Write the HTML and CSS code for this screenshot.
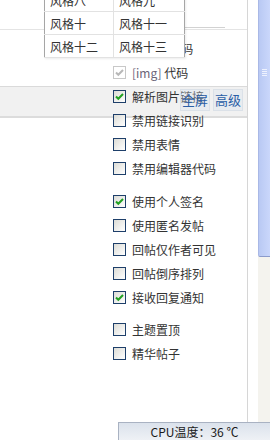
FILE: index.html
```html
<!DOCTYPE html>
<html lang="zh-CN">
<head>
    <meta charset="UTF-8">
    <meta name="viewport" content="width=device-width, initial-scale=1.0">
    <title>发帖选项</title>
    <link rel="stylesheet" href="styles.css">
</head>
<body>

    <div class="screen">
        <div class="page">
            <div class="head"><span class="field"></span></div>

            <!-- barre d'outils de l'éditeur -->
            <div class="toolbar"></div>
            <div class="tool-buttons">
                <span class="tool-btn">全屏</span>
                <span class="tool-btn">高级</span>
            </div>

            <div class="options">
                <ul class="group">
                    <li><span class="box"></span>[html]&nbsp;代码</li>
                    <li class="disabled"><span class="box checked"><svg viewBox="0 0 11 11"><path d="M2 5.5 L4.3 7.8 L9 3"/></svg></span><span class="tag">[img]&nbsp;</span>代码</li>
                    <li><span class="box checked"><svg viewBox="0 0 11 11"><path d="M2 5.5 L4.3 7.8 L9 3"/></svg></span>解析图片链接</li>
                    <li><span class="box"></span>禁用链接识别</li>
                    <li><span class="box"></span>禁用表情</li>
                    <li><span class="box"></span>禁用编辑器代码</li>
                </ul>
                <ul class="group second">
                    <li><span class="box checked"><svg viewBox="0 0 11 11"><path d="M2 5.5 L4.3 7.8 L9 3"/></svg></span>使用个人签名</li>
                    <li><span class="box"></span>使用匿名发帖</li>
                    <li><span class="box"></span>回帖仅作者可见</li>
                    <li><span class="box"></span>回帖倒序排列</li>
                    <li><span class="box checked"><svg viewBox="0 0 11 11"><path d="M2 5.5 L4.3 7.8 L9 3"/></svg></span>接收回复通知</li>
                </ul>
                <ul class="group third">
                    <li><span class="box"></span>主题置顶</li>
                    <li><span class="box"></span>精华帖子</li>
                </ul>
            </div>

            <!-- menu déroulant des styles -->
            <table class="style-menu">
                <tr><td>风格八</td><td>风格九</td></tr>
                <tr><td>风格十</td><td>风格十一</td></tr>
                <tr><td>风格十二</td><td>风格十三</td></tr>
            </table>
        </div>
        <div class="gap"></div>
        <div class="scroll">
            <div class="thumb">
                <svg class="grip" viewBox="0 0 5 8"><path d="M0 1.5h5M0 3.5h5M0 5.5h5M0 7.5h5"/></svg>
            </div>
        </div>
    </div>

    <div class="status">CPU温度：36 ℃</div>

</body>
</html>
```

FILE: styles.css
```css
body {
    margin: 0;
    font-family: "Noto Sans CJK SC", "Noto Sans", sans-serif;
    font-size: 12px;
    color: #333;
    background-color: #ffffff;
    overflow: hidden;
}

.screen {
    display: grid;
    grid-template-columns: 248px 10px 12px;
    height: 440px;
}

.page {
    position: relative;
    border-right: 1px solid #d6d6d6;
}

.head {
    height: 30px;
    padding-left: 185px;
    border-bottom: 1px solid #e4e4e4;
    box-sizing: border-box;
}
.field {
    display: block;
    width: 40px;
    height: 28px;
    border-bottom: 1px solid #d2d2d2;
    box-sizing: border-box;
}

.toolbar {
    position: absolute;
    top: 86px;
    left: 0;
    right: 0;
    height: 29px;
    background-color: #f1f1f1;
    border-top: 1px solid #dadada;
    border-bottom: 2px solid #dcdcdc;
}
.tool-buttons {
    position: absolute;
    top: 89px;
    left: 180px;
    display: flex;
    gap: 3px;
    z-index: 2;
}
.tool-btn {
    width: 28px;
    height: 20px;
    line-height: 20px;
    text-align: center;
    font-size: 13px;
    color: #2a5ea6;
    background-color: rgba(214, 226, 238, 0.35);
    border: 1px solid #dbe1e8;
}

.options {
    position: relative;
    z-index: 1;
    margin-top: 6px;
}
.group {
    list-style: none;
    margin: 0;
    padding: 0;
}
.group.second {
    margin-top: 9px;
}
.group.third {
    margin-top: 8px;
}
.group li {
    display: flex;
    align-items: center;
    height: 24px;
    padding-left: 113px;
    white-space: nowrap;
}

.box {
    display: inline-flex;
    width: 11px;
    height: 11px;
    margin-right: 6px;
    border: 1px solid #1e3f6a;
    background: linear-gradient(135deg, #dcdcd6, #ffffff);
}
.box svg {
    width: 11px;
    height: 11px;
    fill: none;
    stroke: #21a121;
    stroke-width: 2;
}
.disabled .box {
    border-color: #c8c8c8;
    background: #ffffff;
}
.disabled .box svg {
    stroke: #b8b8b8;
}
.disabled .tag {
    color: #6b6478;
}

.style-menu {
    position: absolute;
    top: -12px;
    left: 44px;
    width: 141px;
    border-collapse: collapse;
    background-color: #ffffff;
    border: 1px solid #a6a6a6;
    box-shadow: 1px 1px 2px rgba(0, 0, 0, 0.08);
    z-index: 3;
}
.style-menu td {
    height: 22px;
    padding: 0 0 0 5px;
    border-bottom: 1px solid #e2e2e2;
    color: #333;
    font-size: 12px;
}
.style-menu td:first-child {
    width: 63px;
    border-right: 1px solid #e2e2e2;
}

.scroll {
    background-color: #f4f3ee;
}
.thumb {
    height: 257px;
    display: flex;
    justify-content: center;
    padding-top: 68px;
    box-sizing: border-box;
    background: linear-gradient(to right, #b9c9f3, #cad7fb);
    border-left: 1px solid #a9b8e6;
    border-bottom: 1px solid #8b9bcb;
    border-radius: 0 0 0 2px;
}
.grip {
    width: 5px;
    height: 8px;
    stroke: #eef2fe;
    stroke-width: 1;
}

.status {
    position: absolute;
    left: 118px;
    right: 0;
    bottom: 0;
    height: 17px;
    line-height: 17px;
    text-align: center;
    color: #1a1a1a;
    background: linear-gradient(#dbe2ec, #eef1f5);
    border-top: 1px solid #a9b2c2;
    border-left: 1px solid #a9b2c2;
}
```
